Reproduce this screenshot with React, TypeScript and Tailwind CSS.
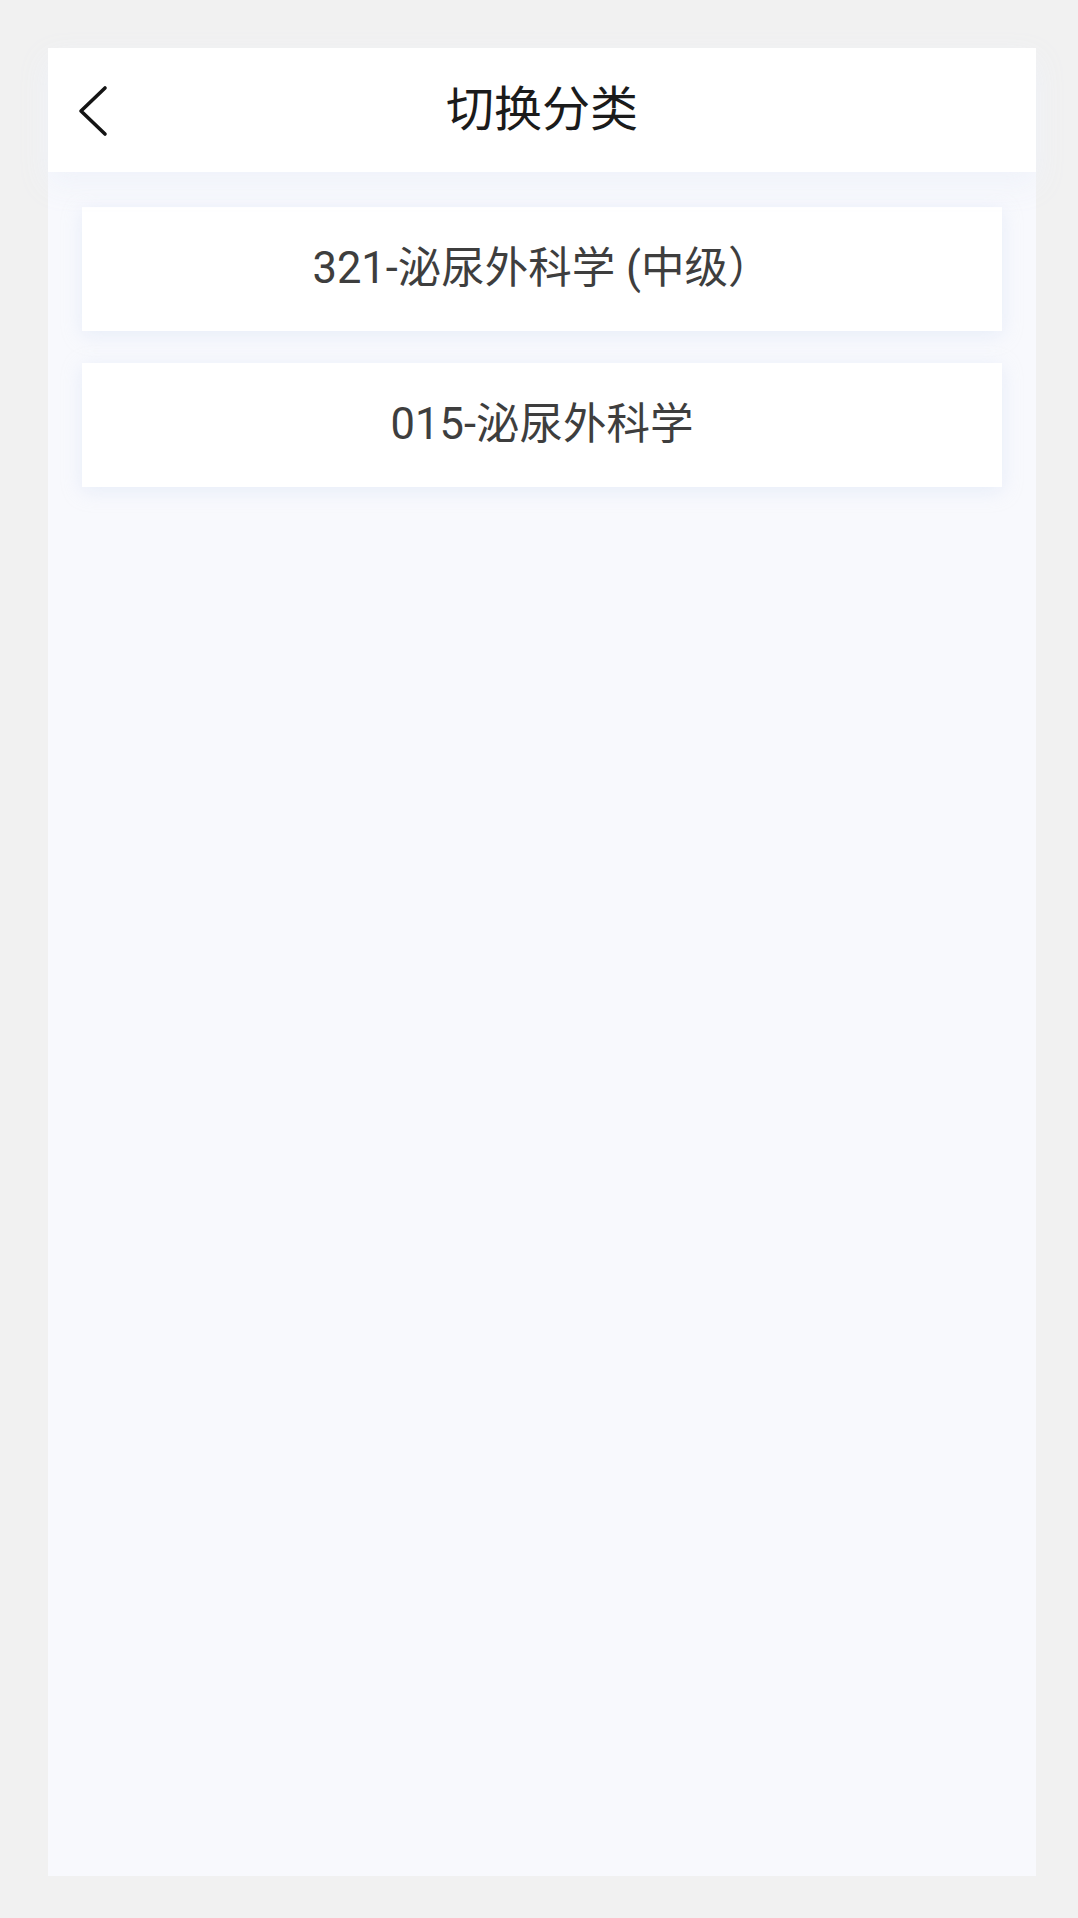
import React from "react";

const categories = ["321-泌尿外科学 (中级）", "015-泌尿外科学"];

const BackIcon: React.FC = () => (
  <svg width="32" height="52" viewBox="0 0 32 52" fill="none">
    <path
      d="M27 3 L3 26 L27 49"
      stroke="#141414"
      strokeWidth="3.6"
      strokeLinecap="round"
      strokeLinejoin="round"
    />
  </svg>
);

export default function App() {
  return (
    <div
      className="min-h-[1918px] w-full bg-[#f1f1f1] pt-[48px] pl-[48px] pr-[42px] pb-[42px]"
      style={{ fontFamily: "Roboto, 'Noto Sans CJK SC', sans-serif" }}
    >
      <div className="flex min-h-[1828px] flex-col bg-[#f8f9fd]">
        {/* header */}
        <div className="relative z-10 flex h-[124px] items-center justify-center bg-white shadow-[0_12px_28px_rgba(238,242,250,0.9)]">
          <button className="absolute left-[30px] top-[37px] flex items-center">
            <BackIcon />
          </button>
          <h1 className="text-[48px] font-normal leading-none text-[#1b1b1b]">切换分类</h1>
        </div>

        {/* list */}
        <div className="flex flex-col gap-[32px] px-[34px] pt-[35px]">
          {categories.map((name) => (
            <div
              key={name}
              className="flex h-[124px] items-center justify-center bg-white shadow-[0_4px_18px_rgba(200,214,240,0.35)]"
            >
              <span className="text-[43.5px] leading-none text-[#3e3e3e]">{name}</span>
            </div>
          ))}
        </div>
      </div>
    </div>
  );
}
